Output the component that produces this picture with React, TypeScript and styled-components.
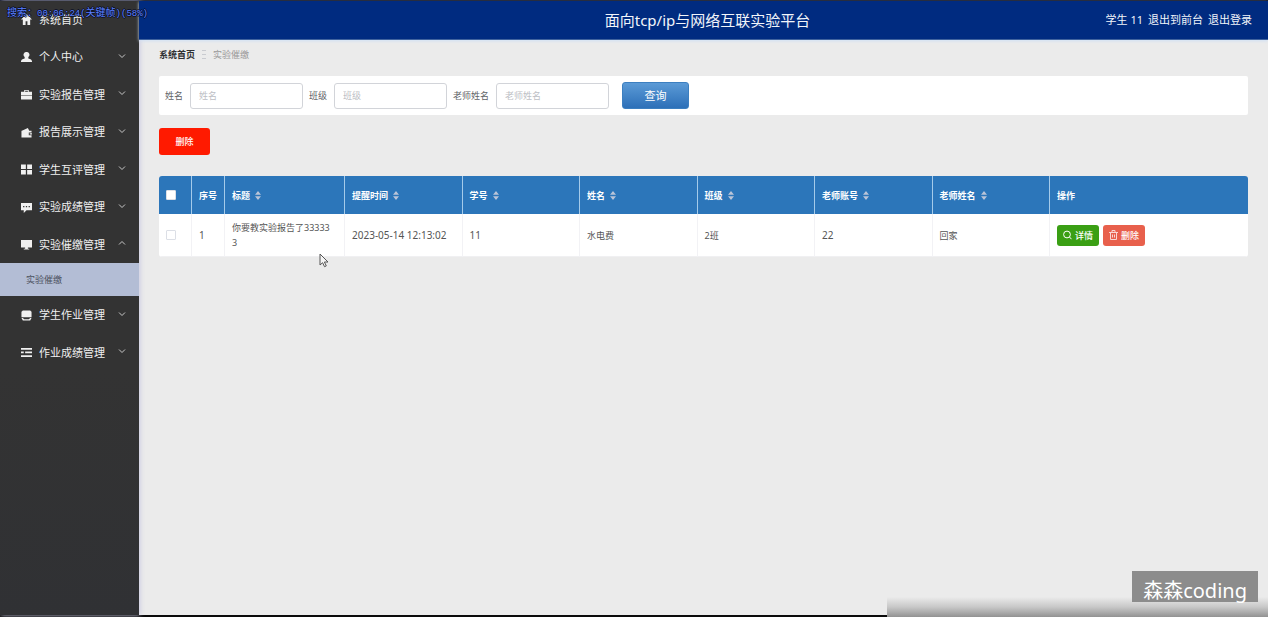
import React from "react";
import styled, { createGlobalStyle } from "styled-components";

const GlobalStyle = createGlobalStyle`
  * { box-sizing: border-box; }
  body {
    margin: 0;
    background: #ebebeb;
    font-family: "Noto Sans", "Noto Sans CJK SC", sans-serif;
    font-size: 9px;
    line-height: 15px;
    color: #555;
  }
  button, input { font: inherit; }
  a { color: inherit; text-decoration: none; }
`;

const Page = styled.div`
  position: relative;
  display: flex;
  min-height: 100vh;
  border-top: 1px solid #05091a;
  border-bottom: 2px solid #0a0a0a;
`;

const Sidebar = styled.nav`
  flex: 0 0 139px;
  background: linear-gradient(#333 60%, #303134);
  box-shadow: 1px 0 5px #c9c9e2;
`;

const Menu = styled.ul`
  margin: 0;
  padding: 0;
  list-style: none;
`;

const MenuItem = styled.li`
  color: #f0f0f0;
`;

const MenuButton = styled.button<{ $tall?: boolean }>`
  display: flex;
  align-items: center;
  width: 100%;
  height: ${(p) => (p.$tall ? 38 : 37)}px;
  padding: 0 13px 0 21px;
  border: 0;
  background: none;
  color: inherit;
  font-size: 11px;
  line-height: 16px;
  cursor: pointer;
`;

const MenuIcon = styled.svg`
  flex: none;
  width: 11px;
  height: 11px;
  margin-right: 7px;
  fill: currentColor;
`;

const Arrow = styled.svg<{ $open?: boolean }>`
  width: 8px;
  height: 6px;
  margin: 0 0 3px auto;
  fill: none;
  stroke: #c8c8c8;
  transform: ${(p) => (p.$open ? "rotate(180deg)" : "none")};
`;

const SubLink = styled.a`
  display: block;
  padding: 9px 26px;
  background: #b3bdd5;
  color: #4c5260;
`;

const Main = styled.main`
  flex: 1;
  min-width: 0;
`;

const Header = styled.header`
  display: grid;
  grid-template-columns: 1fr auto 1fr;
  align-items: center;
  height: 39px;
  padding: 0 16px 0 24px;
  background: #002b80;
  border-bottom: 1px solid #3f629d;
  box-shadow: 0 1px 3px #cfe0f5;
  color: #f2f5fa;
`;

const Title = styled.h1`
  grid-column: 2;
  margin: 0;
  font-size: 15px;
  font-weight: 400;
  line-height: 22px;
`;

const UserLinks = styled.div`
  display: flex;
  justify-content: flex-end;
  gap: 5px;
  font-size: 11px;
  line-height: 16px;
`;

const Content = styled.div`
  padding: 7px 20px 20px;
`;

const Breadcrumb = styled.div`
  display: flex;
  align-items: center;
  gap: 7px;
  color: #999;

  a { font-weight: 700; color: #303133; }
`;

const Separator = styled.svg`
  width: 4px;
  height: 9px;
  stroke: #c9cbd0;
`;

const SearchForm = styled.form`
  display: flex;
  align-items: center;
  gap: 6px;
  height: 39px;
  margin-top: 14px;
  padding: 0 6px;
  border-radius: 2px;
  background: #fff;
`;

const Field = styled.label`
  display: flex;
  align-items: center;
  gap: 7px;
  color: #606266;
  white-space: nowrap;
`;

const TextInput = styled.input`
  width: 113px;
  height: 26px;
  padding: 0 8px;
  border: 1px solid #d2d4d9;
  border-radius: 3px;
  background: #fff;
  outline: none;

  &::placeholder { color: #bcbec4; opacity: 1; }
`;

const SearchButton = styled.button`
  width: 67px;
  height: 27px;
  margin-left: 7px;
  border: 1px solid #3c7fc0;
  border-radius: 3px;
  background: linear-gradient(#5b9ad6, #2d70b8);
  color: #fff;
  font-size: 11px;
`;

const DeleteButton = styled.button`
  display: block;
  width: 51px;
  height: 27px;
  margin: 13px 0 21px;
  border: 0;
  border-radius: 3px;
  background: #ff1a00;
  color: #fff;
  font-weight: 500;
`;

const Table = styled.table`
  width: 100%;
  table-layout: fixed;
  border-collapse: separate;
  border-spacing: 0;
  border-radius: 3px;
  overflow: hidden;
`;

const HeadCell = styled.th`
  height: 38px;
  padding: 0 7px;
  border-right: 1px solid #a5cbea;
  background: #2c76ba;
  color: #fff;
  font-weight: 700;
  text-align: left;

  &:last-child { border-right: 0; }
`;

const Cell = styled.td`
  height: 43px;
  padding: 0 10px 0 7px;
  border-right: 1px solid #f2f2f5;
  border-bottom: 1px solid #f0f0f2;
  background: #fff;
  word-break: break-all;

  &:last-child { border-right: 0; }
`;

const Numeric = styled.span`
  font-size: 10px;
  white-space: nowrap;
`;

const Check = styled.input`
  appearance: none;
  display: block;
  width: 10px;
  height: 10px;
  margin: 0;
  border: 1px solid #dcdfe6;
  border-radius: 1px;
  background: #fff;
`;

const HeadLabel = styled.span`
  display: flex;
  align-items: center;
  gap: 5px;
`;

const SortIcon = styled.svg`
  width: 6px;
  height: 9px;
  fill: #b9c4d8;
`;

const Actions = styled.div`
  display: flex;
  gap: 4px;
`;

const ActionButton = styled.button<{ $color: string }>`
  display: flex;
  align-items: center;
  gap: 3px;
  height: 21px;
  padding: 0 6px;
  border: 0;
  border-radius: 3px;
  background: ${(p) => p.$color};
  color: #fff;
  font-weight: 500;

  svg {
    width: 9px;
    height: 10px;
    fill: none;
    stroke: currentColor;
  }
`;

const SearchStatus = styled.div`
  position: absolute;
  top: 5px;
  left: 7px;
  z-index: 2;
  color: #5b80ff;
  font-family: "Liberation Mono", "Noto Sans CJK SC", monospace;
  line-height: 15px;
  white-space: nowrap;
  text-shadow: 1px 0 #0a0f28, -1px 0 #0a0f28, 0 1px #0a0f28, 0 -1px #0a0f28;

  b { font-size: 10px; font-weight: 400; }
`;

const BottomShade = styled.div`
  position: absolute;
  right: 0;
  bottom: -2px;
  width: 381px;
  height: 20px;
  background: linear-gradient(rgba(235, 235, 235, 0), #c8c8c8 50%, #929292);
`;

const Watermark = styled.div`
  position: absolute;
  right: 10px;
  bottom: 13px;
  height: 31px;
  padding: 0 11px;
  background: #8c8c8c;
  color: #fff;
  font-size: 20px;
  line-height: 40px;
`;

const Pointer = styled.svg`
  position: absolute;
  left: 319px;
  top: 252px;
  width: 10px;
  height: 15px;
  fill: #f5f5f5;
  stroke: #555;
`;

const icons = {
  home: <path d="M6 0 0 6h2v6h3V8h2v4h3V6h2L10 4V1H9v2z" />,
  user: <path d="M6 0a3 3 0 0 0-2 5.400V7C1.500 7.500 0 8.600 0 10.200V11h12v-.8C12 8.600 10.500 7.500 8 7V5.400A3 3 0 0 0 6 0z" />,
  briefcase: <path d="M3.500 3V1h5v2H12v4H0V3h3.500zm1-1v1h3V2h-3zM0 7.500h12v4H0z" />,
  wallet: <path d="M1 4 7.500 1 9 4h2.500v2H8.500v3h3v2.500h-11V4zM9.500 6.800H12v1.500H9.500z" />,
  grid: <path d="M0 .5h5.300v5H0zM6.700.5H12v5H6.700zM0 6.500h5.300v5H0zM6.700 6.500H12v5H6.700z" />,
  chat: <path fillRule="evenodd" d="M0 1h12v8H6l-3 3V9H0zM2.300 4.400v1.200h1.400V4.400zm3 0v1.200h1.400V4.400zm3 0v1.200h1.400V4.400z" />,
  monitor: <path d="M0 1h12v8.300H7.500V10.500H9v1H3v-1h1.500V9.300H0z" />,
  printer: <path d="M2 .5h8l1.500 1.500V8H.5V2zM.5 8.800H2L3.500 10h5L10 8.800h1.500L10 11.500H2z" />,
  lines: <path d="M0 1.200h12v1.800H0zM0 5h3v1.800H0zM4.500 5H12v1.800H4.500zM0 9h12v1.800H0z" />,
};

const menu: { label: string; icon: keyof typeof icons; leaf?: boolean; child?: string }[] = [
  { label: "系统首页", icon: "home", leaf: true },
  { label: "个人中心", icon: "user" },
  { label: "实验报告管理", icon: "briefcase" },
  { label: "报告展示管理", icon: "wallet" },
  { label: "学生互评管理", icon: "grid" },
  { label: "实验成绩管理", icon: "chat" },
  { label: "实验催缴管理", icon: "monitor", child: "实验催缴" },
  { label: "学生作业管理", icon: "printer" },
  { label: "作业成绩管理", icon: "lines" },
];

const sortable = ["标题", "提醒时间", "学号", "姓名", "班级", "老师账号", "老师姓名"];

export default function App() {
  return (
    <>
      <GlobalStyle />
      <Page>
        <Sidebar>
          <Menu>
            {menu.map((item, i) => (
              <MenuItem key={item.label}>
                <MenuButton type="button" $tall={i % 2 === 1}>
                  <MenuIcon viewBox="0 0 12 12">{icons[item.icon]}</MenuIcon>
                  {item.label}
                  {!item.leaf && (
                    <Arrow viewBox="0 0 8 6" $open={!!item.child}>
                      <path d="M1 1.500 4 4.500 7 1.500" />
                    </Arrow>
                  )}
                </MenuButton>
                {item.child && <SubLink href="#reminders">{item.child}</SubLink>}
              </MenuItem>
            ))}
          </Menu>
        </Sidebar>

        <Main>
          <Header>
            <Title>面向tcp/ip与网络互联实验平台</Title>
            <UserLinks>
              <span>学生 11</span>
              <a href="#front">退出到前台</a>
              <a href="#logout">退出登录</a>
            </UserLinks>
          </Header>

          <Content>
            <Breadcrumb>
              <a href="#home">系统首页</a>
              <Separator viewBox="0 0 4 9">
                <path d="M0 .5h4M0 4.500h4M0 8.500h4" />
              </Separator>
              <span>实验催缴</span>
            </Breadcrumb>

            <SearchForm>
              {["姓名", "班级", "老师姓名"].map((label) => (
                <Field key={label}>
                  {label}
                  <TextInput placeholder={label} />
                </Field>
              ))}
              <SearchButton type="button">查询</SearchButton>
            </SearchForm>

            <DeleteButton type="button">删除</DeleteButton>

            <Table>
              <colgroup>
                <col width="33" />
                <col width="33" />
                <col width="120" />
                <col span={6} />
                <col width="198" />
              </colgroup>
              <thead>
                <tr>
                  <HeadCell>
                    <Check type="checkbox" aria-label="全选" />
                  </HeadCell>
                  <HeadCell>序号</HeadCell>
                  {sortable.map((name) => (
                    <HeadCell key={name}>
                      <HeadLabel>
                        {name}
                        <SortIcon viewBox="0 0 6 9">
                          <path d="M3 0 6 3.800H0zM3 9 0 5.200h6z" />
                        </SortIcon>
                      </HeadLabel>
                    </HeadCell>
                  ))}
                  <HeadCell>操作</HeadCell>
                </tr>
              </thead>
              <tbody>
                <tr>
                  <Cell>
                    <Check type="checkbox" aria-label="选择" />
                  </Cell>
                  <Cell><Numeric>1</Numeric></Cell>
                  <Cell>你要教实验报告了333333</Cell>
                  <Cell><Numeric>2023-05-14 12:13:02</Numeric></Cell>
                  <Cell><Numeric>11</Numeric></Cell>
                  <Cell>水电费</Cell>
                  <Cell>2班</Cell>
                  <Cell><Numeric>22</Numeric></Cell>
                  <Cell>回家</Cell>
                  <Cell>
                    <Actions>
                      <ActionButton type="button" $color="#3a9f14">
                        <svg viewBox="0 0 9 10">
                          <circle cx="4" cy="4.500" r="3.400" />
                          <path d="m6.500 7 2 2.200" />
                        </svg>
                        详情
                      </ActionButton>
                      <ActionButton type="button" $color="#e8604c">
                        <svg viewBox="0 0 9 10" opacity="0.75">
                          <path d="M0 2.500h9M3 2.500v-2h3v2M1.500 2.500v7h6v-7M3.500 4.500v3M5.500 4.500v3" />
                        </svg>
                        删除
                      </ActionButton>
                    </Actions>
                  </Cell>
                </tr>
              </tbody>
            </Table>
          </Content>
        </Main>

        <SearchStatus>
          <b>搜索：</b>00:06:24(<b>关键帧</b>)(58%)
        </SearchStatus>
        <Pointer viewBox="0 0 10 15">
          <path d="M1 1v11l2.600-2.300 1.900 4 1.800-.8-1.900-3.900H9z" />
        </Pointer>
        <BottomShade />
        <Watermark>森森coding</Watermark>
      </Page>
    </>
  );
}
